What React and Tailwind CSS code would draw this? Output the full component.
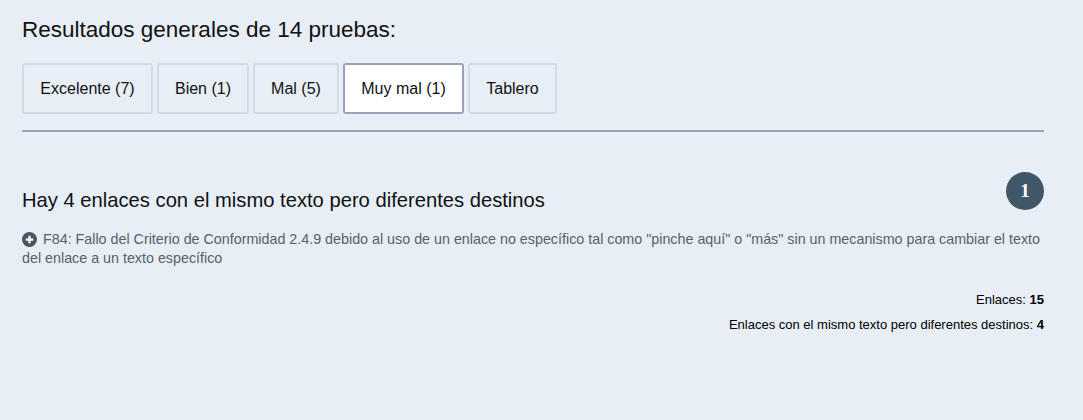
import React from "react";

const tabs = [
  { label: "Excelente (7)", w: "w-[131px]" },
  { label: "Bien (1)", w: "w-[92px]" },
  { label: "Mal (5)", w: "w-[86px]" },
  { label: "Muy mal (1)", w: "w-[121px]", active: true },
  { label: "Tablero", w: "w-[89px]" },
];

export default function App() {
  return (
    <div className="min-h-[420px] bg-[#e7eef6] px-[22px] pt-[16px] font-['Liberation_Sans',Arial,sans-serif] text-[#111]">
      <h1 className="text-[22.5px] leading-[28px]">Resultados generales de 14 pruebas:</h1>

      <div className="mt-[19px] flex gap-[4px]">
        {tabs.map((t) => (
          <button
            key={t.label}
            className={`${t.w} h-[51px] rounded-[3px] border-2 text-[16px] ${
              t.active ? "bg-white border-[#9aa2b7]" : "bg-[#e7eef6] border-[#d2dae5]"
            }`}
          >
            {t.label}
          </button>
        ))}
      </div>

      <div className="mt-[16px] mr-[17px] h-[2px] bg-[#9ba3b8]" />

      <div className="mr-[17px] mt-[41px] flex items-start justify-between">
        <h2 className="pt-[13px] text-[20.2px] leading-[28px]">
          Hay 4 enlaces con el mismo texto pero diferentes destinos
        </h2>
        <div className="-mt-[1px] flex h-[38px] w-[38px] items-center justify-center rounded-full bg-[#3f5767] font-['Liberation_Serif',serif] text-[19px] font-bold text-white">
          1
        </div>
      </div>

      <p className="mr-[17px] mt-[16px] text-[14.3px] leading-[19px] text-[#5b5f66]">
        <svg
          viewBox="0 0 16 16"
          className="mr-[6px] inline-block h-[15px] w-[15px] -translate-y-[1px] align-middle"
        >
          <circle cx="8" cy="8" r="8" fill="#4a5360" />
          <path d="M8 4v8M4 8h8" stroke="#fff" strokeWidth="2.4" />
        </svg>
        F84: Fallo del Criterio de Conformidad 2.4.9 debido al uso de un enlace no específico tal como "pinche aquí" o "más" sin un mecanismo para cambiar el texto del enlace a un texto específico
      </p>

      <div className="mr-[17px] mt-[23px] flex flex-col items-end gap-[7px] text-[13px] leading-[18px] text-black">
        <div>
          Enlaces: <b>15</b>
        </div>
        <div>
          Enlaces con el mismo texto pero diferentes destinos: <b>4</b>
        </div>
      </div>
    </div>
  );
}
